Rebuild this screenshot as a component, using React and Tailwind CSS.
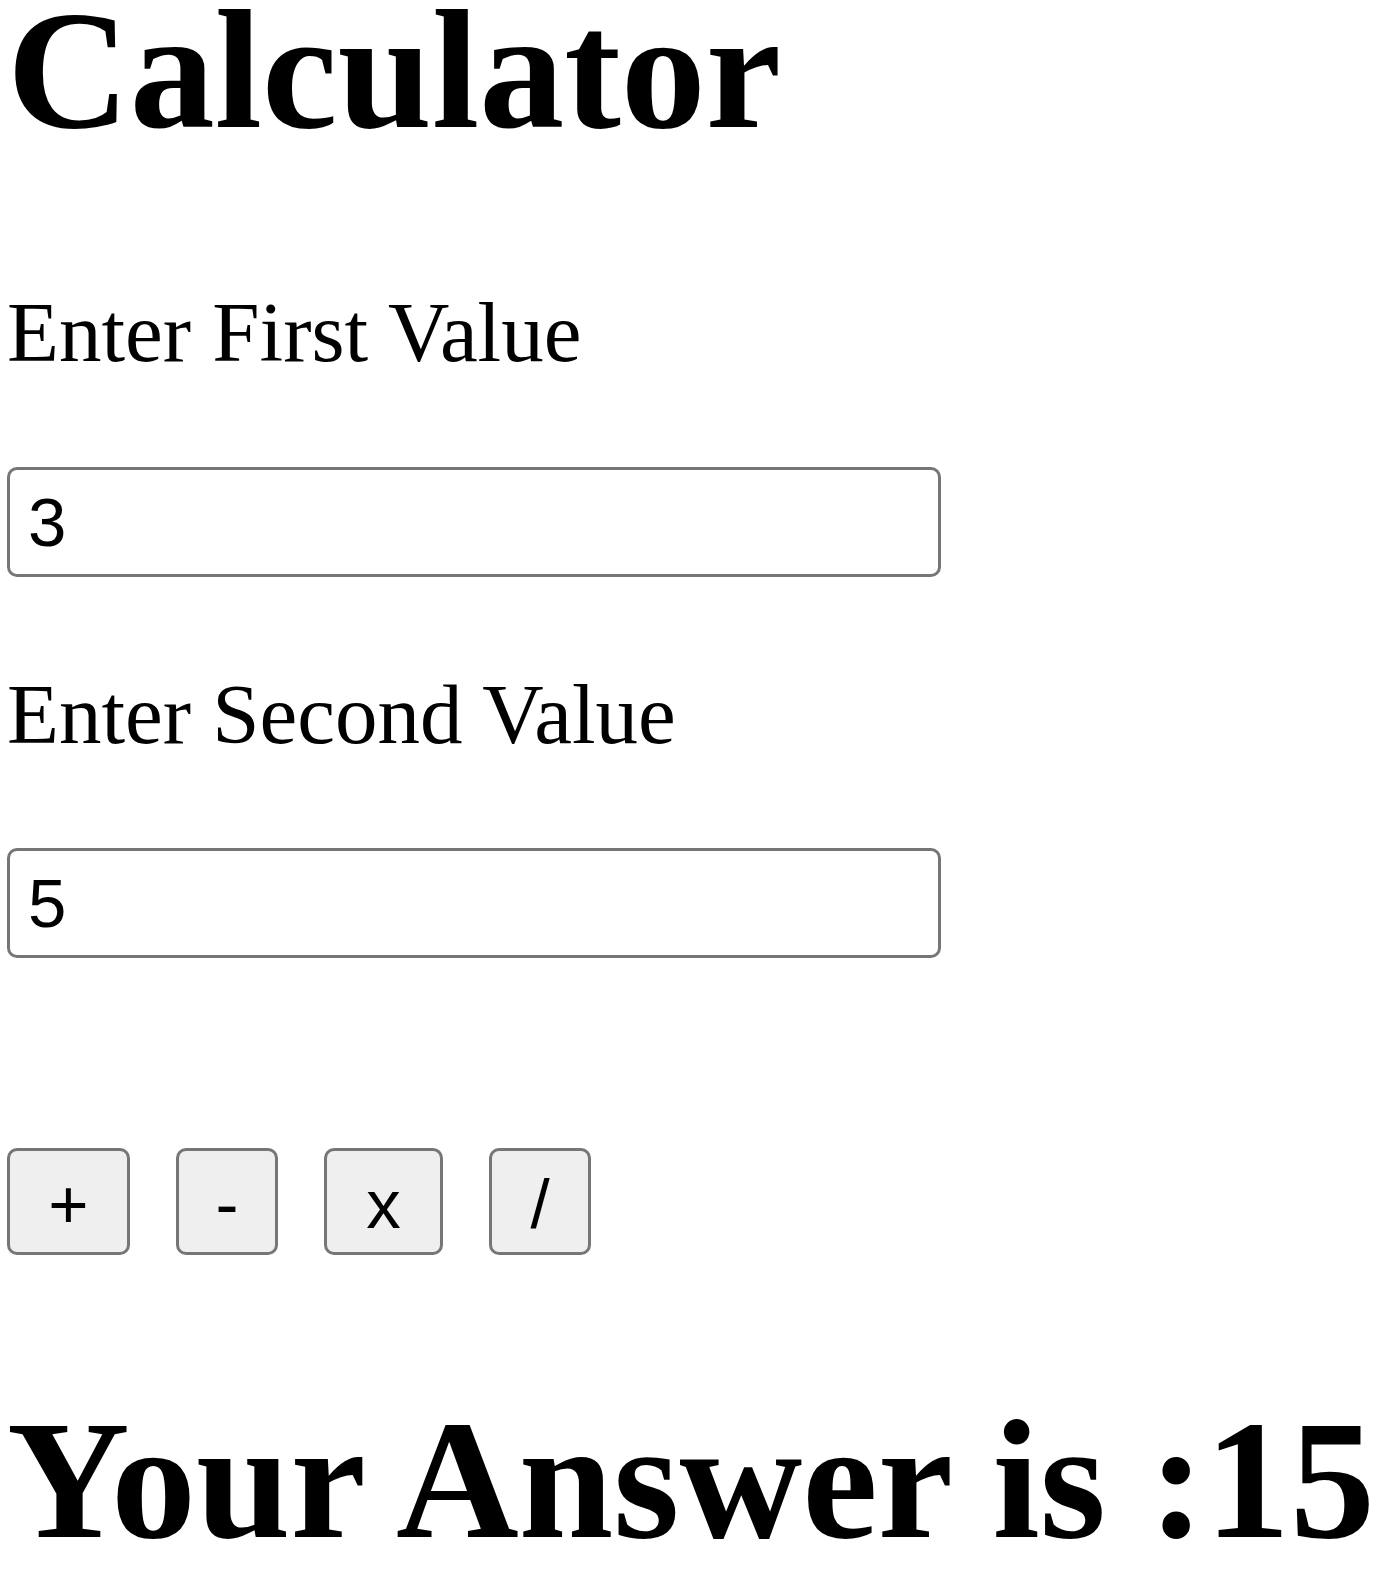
import React, { useState } from "react";

const ops = [
  { label: "+", w: "w-[123px]", fn: (a, b) => a + b },
  { label: "-", w: "w-[102px]", fn: (a, b) => a - b },
  { label: "x", w: "w-[119px]", fn: (a, b) => a * b },
  { label: "/", w: "w-[102px]", fn: (a, b) => a / b },
];

const App = () => {
  const [first, setFirst] = useState("3");
  const [second, setSecond] = useState("5");
  const [answer, setAnswer] = useState(15);

  const inputCls =
    "block w-[934px] h-[110px] border-[3px] border-[#767676] rounded-[10px] bg-white pl-[18px] text-[69px] text-black font-['Liberation_Sans',Arial,sans-serif] outline-none";

  return (
    <div className="pl-[7px] bg-white text-black font-['Liberation_Serif','Times_New_Roman',serif]">
      <h1 className="text-[170px] leading-[141px] font-bold whitespace-nowrap">
        Calculator
      </h1>

      <div className="mt-[143px] text-[85px] leading-[96px] whitespace-nowrap">
        Enter First Value
      </div>
      <input
        className={`mt-[87px] ${inputCls}`}
        value={first}
        onChange={(e) => setFirst(e.target.value)}
      />

      <div className="mt-[89px] text-[85px] leading-[96px] whitespace-nowrap">
        Enter Second Value
      </div>
      <input
        className={`mt-[86px] ${inputCls}`}
        value={second}
        onChange={(e) => setSecond(e.target.value)}
      />

      <div className="mt-[190px] flex gap-[46px]">
        {ops.map((op) => (
          <button
            key={op.label}
            onClick={() => setAnswer(op.fn(Number(first), Number(second)))}
            className={`${op.w} h-[107px] pt-[6px] border-[3px] border-[#767676] rounded-[10px] bg-[#efefef] text-[69px] leading-none text-black font-['Liberation_Sans',Arial,sans-serif] flex items-center justify-center`}
          >
            {op.label}
          </button>
        ))}
      </div>

      <h1 className="mt-[150px] text-[170px] leading-[150px] font-bold whitespace-nowrap">
        Your Answer is :{answer}
      </h1>
    </div>
  );
};

export default App;
